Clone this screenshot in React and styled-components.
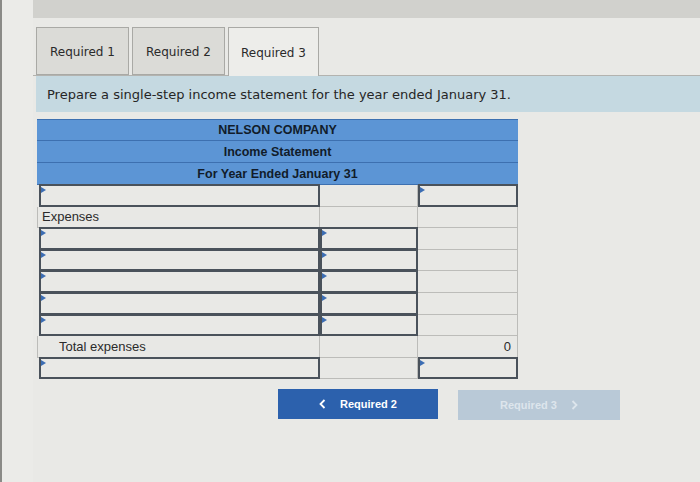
import React from 'react';
import styled, { createGlobalStyle } from 'styled-components';

const GlobalStyle = createGlobalStyle`
  html, body {
    margin: 0;
    padding: 0;
    background: #e9e9e6;
  }
`;

const Page = styled.div`
  display: flex;
  width: 700px;
  height: 482px;
  overflow: hidden;
  font-family: "Liberation Sans", Arial, sans-serif;
`;

const Gutter = styled.div`
  width: 31px;
  border-left: 2px solid #8a8a87;
  background: #ebebe8;
`;

const Main = styled.div`
  flex: 1;
  display: flex;
  flex-direction: column;
`;

const TopBar = styled.div`
  height: 18px;
  background: #d1d1cd;
`;

const TabRow = styled.div`
  display: flex;
  gap: 3px;
  margin-top: 9px;
  padding-left: 3px;
  height: 48px;
  border-bottom: 1px solid #b3b3af;
`;

const Tab = styled.div`
  width: ${(p) => (p.$active ? '91px' : '93px')};
  box-sizing: border-box;
  height: ${(p) => (p.$active ? '49px' : '48px')};
  display: flex;
  align-items: center;
  justify-content: center;
  padding-top: 2px;
  border: 1px solid #a9a9a5;
  border-bottom: ${(p) => (p.$active ? 'none' : '1px solid #a9a9a5')};
  background: ${(p) => (p.$active ? '#ededea' : '#dbdbd7')};
  font-family: "DejaVu Sans", Verdana, sans-serif;
  font-size: 12px;
  color: #2a2a2a;
`;

const Instruction = styled.div`
  margin-left: 3px;
  height: 35px;
  display: flex;
  align-items: center;
  padding-left: 11px;
  padding-top: 1px;
  background: #c5d9e1;
  font-family: "DejaVu Sans", Verdana, sans-serif;
  font-size: 13px;
  color: #262626;
`;

const Table = styled.div`
  margin-left: 4px;
  margin-top: 7px;
  width: 481px;
  display: flex;
  flex-direction: column;
`;

const HeaderRow = styled.div`
  height: 22px;
  box-sizing: border-box;
  display: flex;
  align-items: center;
  justify-content: center;
  background: #5c95d5;
  border-bottom: 1px solid #3d70b0;
  border-top: ${(p) => (p.$first ? '1px solid #3d70b0' : 'none')};
  font-size: 12.5px;
  font-weight: bold;
  color: #111c2a;
`;

const Row = styled.div`
  display: grid;
  grid-template-columns: 283px 98px 100px;
  height: 21.6px;
`;

const Cell = styled.div`
  box-sizing: border-box;
  border-right: 1px solid #bcbcb9;
  border-bottom: 1px solid #bcbcb9;
  border-left: ${(p) => (p.$first ? '1px solid #bcbcb9' : 'none')};
  background: #e8e8e5;
  display: flex;
  align-items: center;
  justify-content: ${(p) => (p.$right ? 'flex-end' : 'flex-start')};
  padding: ${(p) => (p.$indent ? '0 0 0 21px' : '0 6px 0 4px')};
  font-size: 13px;
  color: #2b2b2b;
`;

const InputCell = styled.div`
  position: relative;
  box-sizing: border-box;
  border: 2px solid #4a525b;
  margin-left: ${(p) => (p.$first ? '2px' : '0')};
  margin-top: -1px;
  background: #e9e9e6;
  &::before {
    content: '';
    position: absolute;
    top: 1px;
    left: 0;
    border-top: 3px solid transparent;
    border-bottom: 3px solid transparent;
    border-left: 5px solid #3c6db3;
  }
`;

const ButtonRow = styled.div`
  display: flex;
  gap: 20px;
  margin-top: 10px;
  padding-left: 245px;
`;

const NavButton = styled.div`
  width: ${(p) => (p.$disabled ? '162px' : '160px')};
  height: 30px;
  box-sizing: border-box;
  display: flex;
  align-items: center;
  justify-content: center;
  gap: 14px;
  margin-top: ${(p) => (p.$disabled ? '1px' : '0')};
  background: ${(p) => (p.$disabled ? '#b9c9d7' : '#2c61ad')};
  color: ${(p) => (p.$disabled ? '#dde5ec' : '#ffffff')};
  font-size: 11px;
  font-weight: bold;
`;

const Chevron = ({ dir }) => (
  <svg width="7" height="10" viewBox="0 0 7 10">
    <path
      d={dir === 'left' ? 'M5.5 1 L1.5 5 L5.5 9' : 'M1.5 1 L5.5 5 L1.5 9'}
      fill="none"
      stroke="currentColor"
      strokeWidth="1.8"
    />
  </svg>
);

const rows = [
  ['input', 'plain', 'input'],
  ['label:Expenses', 'plain', 'plain'],
  ['input', 'input', 'plain'],
  ['input', 'input', 'plain'],
  ['input', 'input', 'plain'],
  ['input', 'input', 'plain'],
  ['input', 'input', 'plain'],
  ['indent:Total expenses', 'plain', 'value:0'],
  ['input', 'plain', 'input'],
];

const renderCell = (kind, i) => {
  const first = i === 0;
  if (kind === 'input') return <InputCell key={i} $first={first} />;
  const [type, text] = kind.split(':');
  return (
    <Cell key={i} $first={first} $indent={type === 'indent'} $right={type === 'value'}>
      {text}
    </Cell>
  );
};

const App = () => (
  <>
    <GlobalStyle />
    <Page>
      <Gutter />
      <Main>
        <TopBar />
        <TabRow>
          <Tab>Required 1</Tab>
          <Tab>Required 2</Tab>
          <Tab $active>Required 3</Tab>
        </TabRow>
        <Instruction>
          Prepare a single-step income statement for the year ended January 31.
        </Instruction>
        <Table>
          <HeaderRow $first>NELSON COMPANY</HeaderRow>
          <HeaderRow>Income Statement</HeaderRow>
          <HeaderRow>For Year Ended January 31</HeaderRow>
          {rows.map((r, idx) => (
            <Row key={idx}>{r.map(renderCell)}</Row>
          ))}
        </Table>
        <ButtonRow>
          <NavButton>
            <Chevron dir="left" />
            Required 2
          </NavButton>
          <NavButton $disabled>
            Required 3
            <Chevron dir="right" />
          </NavButton>
        </ButtonRow>
      </Main>
    </Page>
  </>
);

export default App;
